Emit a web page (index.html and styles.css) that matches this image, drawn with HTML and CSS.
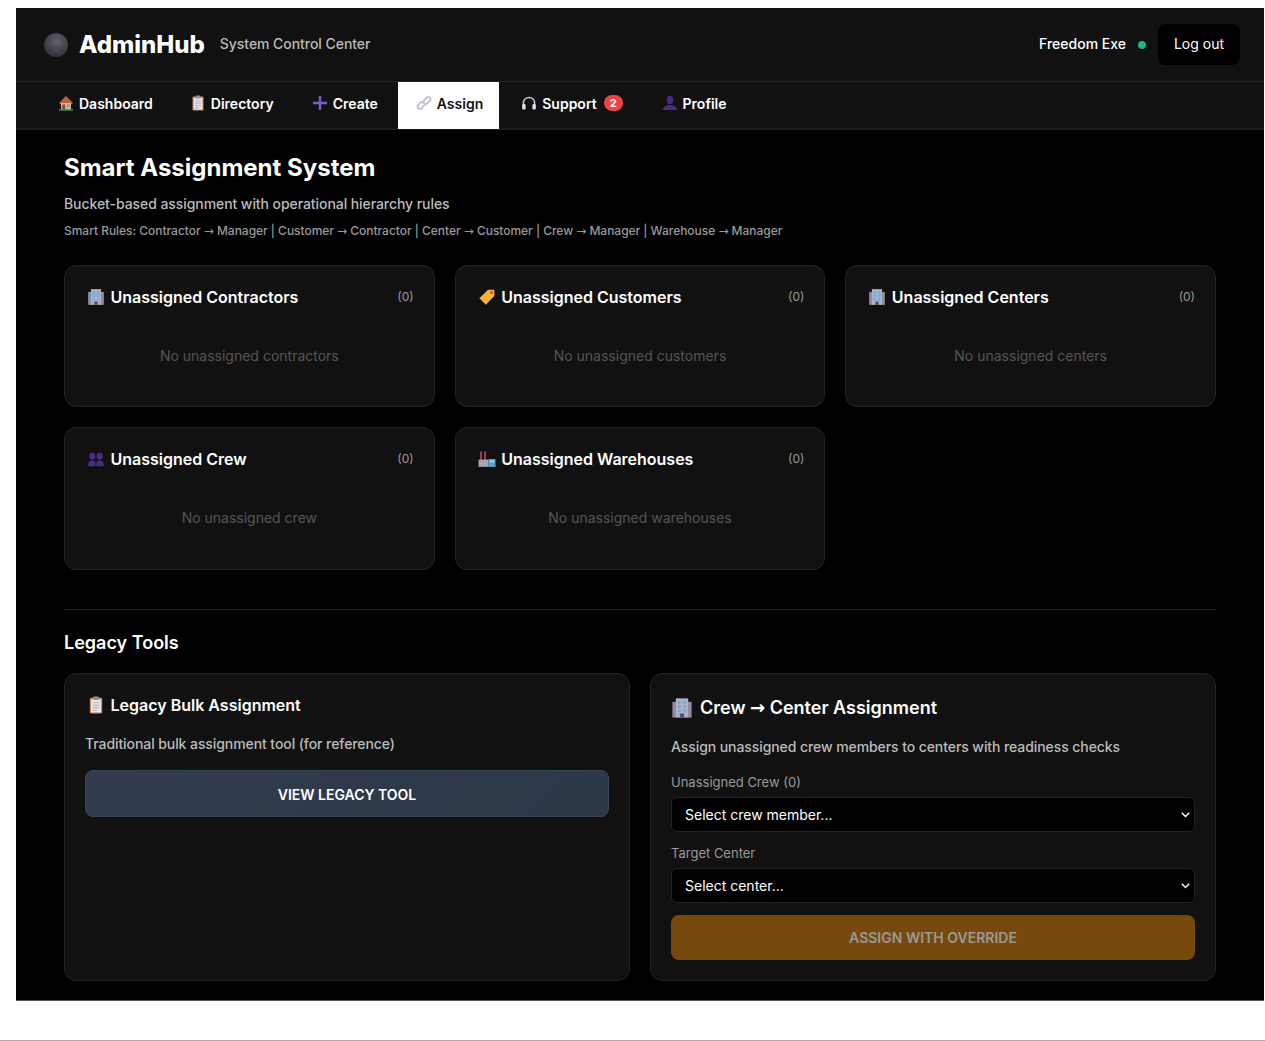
FILE: index.html
```html
<!DOCTYPE html>
<html lang="en">
<head>
    <meta charset="UTF-8">
    <meta name="viewport" content="width=device-width, initial-scale=1.0">
    <title>AdminHub - Assign</title>
    <link rel="stylesheet" href="styles.css">
</head>
<body>
    <svg class="icon-defs" width="0" height="0">
        <defs>
            <symbol id="i-house" viewBox="0 0 16 16">
                <path d="M1 8 8 1 15 8l-1.200 1H2.200z" fill="#c0603f"/>
                <rect x="3" y="8" width="10" height="6.500" fill="#d9b48f"/>
                <rect x="4.200" y="9.500" width="3" height="5" fill="#8a4f2c"/>
                <rect x="9" y="9.500" width="3" height="2.500" fill="#5fa8d8"/>
                <rect x="1" y="14.300" width="14" height="1.300" fill="#43a85a"/>
            </symbol>
            <symbol id="i-clip" viewBox="0 0 16 16">
                <rect x="2.500" y="1.500" width="11" height="14" rx="1" fill="#d08a55"/>
                <rect x="3.600" y="3" width="8.800" height="11.600" fill="#e8e6ee"/>
                <rect x="5.500" y="0.500" width="5" height="3" rx=".6" fill="#8f8f9a"/>
                <path d="M5 6h6M5 8.200h6M5 10.400h6M5 12.600h4" stroke="#a5a5b2" stroke-width=".8"/>
            </symbol>
            <symbol id="i-plus" viewBox="0 0 16 16">
                <path d="M8 1v14M1 8h14" stroke="#7a5cc4" stroke-width="2.400"/>
            </symbol>
            <symbol id="i-link" viewBox="0 0 16 16">
                <g fill="none" stroke="#c4bccf" stroke-width="1.800">
                    <rect x="1" y="8.200" width="8" height="4.600" rx="2.300" transform="rotate(-45 5 10.500)"/>
                    <rect x="7" y="3.200" width="8" height="4.600" rx="2.300" transform="rotate(-45 11 5.500)"/>
                </g>
            </symbol>
            <symbol id="i-phones" viewBox="0 0 16 16">
                <path d="M2.400 10V8a5.600 5.600 0 0 1 11.200 0v2" fill="none" stroke="#c9c9cf" stroke-width="1.500"/>
                <rect x="1.200" y="9" width="3.400" height="5.600" rx="1.300" fill="#e4e4e8"/>
                <rect x="11.400" y="9" width="3.400" height="5.600" rx="1.300" fill="#e4e4e8"/>
            </symbol>
            <symbol id="i-person" viewBox="0 0 16 16">
                <ellipse cx="8" cy="5" rx="3.300" ry="4.200" fill="#4a2a82"/>
                <path d="M1 15c0-3.600 3.400-5 7-5s7 1.400 7 5z" fill="#4a2a82"/>
            </symbol>
            <symbol id="i-people" viewBox="0 0 16 16">
                <g fill="#4a2a82">
                    <ellipse cx="4.800" cy="5.500" rx="2.700" ry="3"/>
                    <ellipse cx="11.200" cy="5.500" rx="2.700" ry="3"/>
                    <path d="M.8 14.500c0-3.700 1.700-5.500 4-5.500s3 1.700 3 5.500zM8.200 14.500c0-3.800.8-5.500 3-5.500s4 1.800 4 5.500z"/>
                </g>
            </symbol>
            <symbol id="i-building" viewBox="0 0 16 16">
                <rect x="1" y="3.500" width="3" height="11.500" fill="#8e8a9c"/>
                <rect x="12" y="3.500" width="3" height="11.500" fill="#8e8a9c"/>
                <rect x="3.500" y="1" width="9" height="14" fill="#b3afc0"/>
                <path d="M5 3h2v2H5zM9 3h2v2H9zM5 6h2v2H5zM9 6h2v2H9zM5 9h2v2H5zM9 9h2v2H9z" fill="#4fb6ee"/>
                <rect x="6.500" y="12" width="3" height="3" fill="#55506a"/>
            </symbol>
            <symbol id="i-tag" viewBox="0 0 16 16">
                <path d="M9 1.500h5.500V7L7 14.800 1.200 9z" fill="#f5b13d"/>
                <circle cx="12" cy="4" r="1.300" fill="#c9503f"/>
            </symbol>
            <symbol id="i-factory" viewBox="0 0 16 16">
                <path d="M2 1h1.500v8H2zM5.500 1H7v8H5.500z" fill="#b5425f"/>
                <path d="M.5 15V8.500h9V15z" fill="#a9a3b6"/>
                <rect x="9.500" y="8" width="6" height="7" fill="#5aa7d4"/>
                <path d="M10.800 9.500h1.400v1.400h-1.400zM13 9.500h1.400v1.400H13z" fill="#cfe9f7"/>
            </symbol>
        </defs>
    </svg>

    <div class="page">
        <div class="app">
            <header class="topbar">
                <div class="brand">
                    <span class="avatar"></span>
                    <h1 class="brand-name">AdminHub</h1>
                    <span class="brand-sub">System Control Center</span>
                </div>
                <div class="user">
                    <span class="user-name">Freedom Exe</span>
                    <span class="status-dot"></span>
                    <button class="logout" type="button">Log out</button>
                </div>
            </header>

            <nav class="tabs">
                <a class="tab" href="#"><svg class="tab-icon"><use href="#i-house"/></svg>Dashboard</a>
                <a class="tab" href="#"><svg class="tab-icon"><use href="#i-clip"/></svg>Directory</a>
                <a class="tab" href="#"><svg class="tab-icon"><use href="#i-plus"/></svg>Create</a>
                <a class="tab active" href="#"><svg class="tab-icon"><use href="#i-link"/></svg>Assign</a>
                <a class="tab" href="#"><svg class="tab-icon"><use href="#i-phones"/></svg>Support<span class="badge">2</span></a>
                <a class="tab" href="#"><svg class="tab-icon"><use href="#i-person"/></svg>Profile</a>
            </nav>

            <main class="content">
                <h2 class="page-title">Smart Assignment System</h2>
                <p class="page-sub">Bucket-based assignment with operational hierarchy rules</p>
                <p class="page-rules">Smart Rules: Contractor <span class="arrow">→</span> Manager | Customer <span class="arrow">→</span> Contractor | Center <span class="arrow">→</span> Customer | Crew <span class="arrow">→</span> Manager | Warehouse <span class="arrow">→</span> Manager</p>

                <section class="buckets">
                    <div class="card bucket">
                        <div class="bucket-head">
                            <h3 class="card-title"><svg class="card-icon"><use href="#i-building"/></svg>Unassigned Contractors</h3>
                            <span class="count">(0)</span>
                        </div>
                        <p class="empty">No unassigned contractors</p>
                    </div>
                    <div class="card bucket">
                        <div class="bucket-head">
                            <h3 class="card-title"><svg class="card-icon"><use href="#i-tag"/></svg>Unassigned Customers</h3>
                            <span class="count">(0)</span>
                        </div>
                        <p class="empty">No unassigned customers</p>
                    </div>
                    <div class="card bucket">
                        <div class="bucket-head">
                            <h3 class="card-title"><svg class="card-icon"><use href="#i-building"/></svg>Unassigned Centers</h3>
                            <span class="count">(0)</span>
                        </div>
                        <p class="empty">No unassigned centers</p>
                    </div>
                    <div class="card bucket">
                        <div class="bucket-head">
                            <h3 class="card-title"><svg class="card-icon"><use href="#i-people"/></svg>Unassigned Crew</h3>
                            <span class="count">(0)</span>
                        </div>
                        <p class="empty">No unassigned crew</p>
                    </div>
                    <div class="card bucket">
                        <div class="bucket-head">
                            <h3 class="card-title"><svg class="card-icon"><use href="#i-factory"/></svg>Unassigned Warehouses</h3>
                            <span class="count">(0)</span>
                        </div>
                        <p class="empty">No unassigned warehouses</p>
                    </div>
                </section>

                <section class="legacy">
                    <h2 class="legacy-title">Legacy Tools</h2>
                    <div class="legacy-grid">
                        <div class="card tool">
                            <h3 class="card-title"><svg class="card-icon"><use href="#i-clip"/></svg>Legacy Bulk Assignment</h3>
                            <p class="tool-text">Traditional bulk assignment tool (for reference)</p>
                            <button class="btn btn-slate" type="button">VIEW LEGACY TOOL</button>
                        </div>
                        <div class="card tool">
                            <h3 class="card-title crew-title"><svg class="crew-icon"><use href="#i-building"/></svg><span>Crew <span class="arrow">→</span> Center Assignment</span></h3>
                            <p class="tool-text crew-text">Assign unassigned crew members to centers with readiness checks</p>
                            <label class="field-label" for="crew">Unassigned Crew (0)</label>
                            <select class="field" id="crew">
                                <option>Select crew member...</option>
                            </select>
                            <label class="field-label" for="center">Target Center</label>
                            <select class="field" id="center">
                                <option>Select center...</option>
                            </select>
                            <button class="btn btn-amber" type="button">ASSIGN WITH OVERRIDE</button>
                        </div>
                    </div>
                </section>
            </main>
        </div>
    </div>
    <div class="page-foot"></div>
</body>
</html>
```

FILE: styles.css
```css
* {
    box-sizing: border-box;
}
body {
    margin: 0;
    font-family: Inter, "Liberation Sans", sans-serif;
    background: #fff;
    color: #fff;
}
h1, h2, h3, p {
    margin: 0;
}
.icon-defs {
    position: absolute;
}
.arrow {
    font-family: "DejaVu Sans", sans-serif;
}
.page {
    padding: 8px 1px 0 16px;
}
.app {
    background: #000;
    height: 993px;
    overflow: hidden;
    border-bottom: 1px solid #555;
}
.topbar {
    height: 74px;
    display: flex;
    align-items: center;
    justify-content: space-between;
    padding: 0 24px 0 28px;
    background: #111;
    border-bottom: 1px solid #222;
}
.brand {
    display: flex;
    align-items: center;
}
.avatar {
    width: 24px;
    height: 24px;
    border-radius: 50%;
    background: radial-gradient(circle at 55% 35%, #63606a, #37333f 70%, #2b2833);
}
.brand-name {
    margin-left: 11px;
    font-size: 24px;
    font-weight: 800;
}
.brand-sub {
    margin-left: 15px;
    padding-bottom: 2px;
    font-size: 14px;
    font-weight: 500;
    letter-spacing: -0.05px;
    color: #bbb;
}
.user {
    display: flex;
    align-items: center;
}
.user-name {
    padding-bottom: 2px;
    font-size: 14px;
    font-weight: 500;
}
.status-dot {
    width: 8px;
    height: 8px;
    margin: 0 12px;
    border-radius: 50%;
    background: #10b981;
}
.logout {
    width: 82px;
    height: 41px;
    padding: 0 0 3px;
    border: none;
    border-radius: 8px;
    background: #000;
    color: #fff;
    font: inherit;
    font-size: 14px;
}
.tabs {
    height: 48px;
    display: flex;
    gap: 4px;
    padding-left: 24px;
    background: #111;
    border-bottom: 2px solid #1c1c1c;
}
.tab {
    display: flex;
    align-items: center;
    height: 47px;
    padding: 0 16px 5px 19px;
    color: #fff;
    font-size: 14px;
    font-weight: 600;
    text-decoration: none;
}
.tab:first-child {
    padding-right: 15px;
}
.tab.active {
    background: #fff;
    color: #111;
}
.tab-icon {
    width: 16px;
    height: 16px;
    margin: 0 5px 0 -1px;
}
.badge {
    margin: 0 1px 0 7px;
    padding: 0 6px;
    height: 16px;
    line-height: 16px;
    border-radius: 8px;
    background: #ef4444;
    font-size: 11px;
    font-weight: 700;
}
.content {
    padding: 22px 48px 0;
}
.page-title {
    font-size: 24px;
    line-height: 32px;
    font-weight: 700;
}
.page-sub {
    margin-top: 10px;
    font-size: 14px;
    line-height: 20px;
    color: #bbb;
    font-weight: 500;
    letter-spacing: -0.07px;
}
.page-rules {
    margin-top: 8px;
    font-size: 12px;
    line-height: 18px;
    color: #999;
    font-weight: 500;
    letter-spacing: -0.03px;
}
.card {
    background: #111;
    border: 1px solid #222;
    border-radius: 12px;
    padding: 20px;
}
.buckets {
    display: grid;
    grid-template-columns: repeat(3, 1fr);
    gap: 20px;
    margin-top: 25px;
}
.bucket {
    height: 142.250px;
}
.bucket-head {
    display: flex;
    justify-content: space-between;
    align-items: flex-start;
}
.card-title {
    display: flex;
    align-items: center;
    font-size: 16px;
    line-height: 22px;
    font-weight: 600;
}
.card-icon {
    width: 18px;
    height: 18px;
    margin: 0 5.500px 0 2px;
    flex: none;
}
.count {
    font-size: 12px;
    line-height: 22px;
    color: #999;
}
.empty {
    margin-top: 38px;
    text-align: center;
    font-size: 14px;
    line-height: 20px;
    color: #555;
}
.legacy {
    margin-top: 39.500px;
    padding-top: 20px;
    border-top: 1px solid #222;
}
.legacy-title {
    font-size: 18px;
    line-height: 26px;
    font-weight: 600;
}
.legacy-grid {
    display: grid;
    grid-template-columns: 1fr 1fr;
    gap: 20px;
    margin-top: 17px;
}
.tool {
    height: 308px;
}
.tool-text {
    margin-top: 18px;
    font-size: 14px;
    line-height: 20px;
    color: #bbb;
    font-weight: 500;
    letter-spacing: -0.08px;
}
.crew-title {
    padding-top: 1px;
    font-size: 18px;
    line-height: 26px;
}
.crew-icon {
    width: 22px;
    height: 22px;
    margin: 0 7px 0 0;
    flex: none;
}
.crew-text {
    margin-top: 16px;
}
.field-label {
    display: block;
    margin: 16px 0 6px;
    font-size: 13px;
    line-height: 18px;
    color: #999;
}
.field + .field-label {
    margin-top: 12px;
}
.field {
    display: block;
    width: 100%;
    height: 35px;
    padding: 0 20px 0 13px;
    appearance: none;
    background: #000 url("data:image/svg+xml,%3Csvg xmlns='http://www.w3.org/2000/svg' width='9' height='6'%3E%3Cpath d='M.8.8 4.500 4.500 8.200.8' fill='none' stroke='%23fff' stroke-width='1.500'/%3E%3C/svg%3E") no-repeat right 4px center;
    color: #fff;
    border: 1px solid #222;
    border-radius: 6px;
    font: inherit;
    font-size: 14px;
}
.btn {
    display: block;
    width: 100%;
    border-radius: 8px;
    font: inherit;
    font-size: 14px;
    font-weight: 600;
}
.btn-slate {
    height: 47px;
    margin-top: 16px;
    padding-top: 2px;
    background: linear-gradient(135deg, #323c4e, #2c3748);
    border: 1px solid #3a4658;
    color: #fff;
}
.btn-amber {
    height: 45px;
    margin-top: 12px;
    background: #78490c;
    border: none;
    color: #999;
}
.page-foot {
    height: 40px;
    border-bottom: 1px solid #aaa;
}
```
